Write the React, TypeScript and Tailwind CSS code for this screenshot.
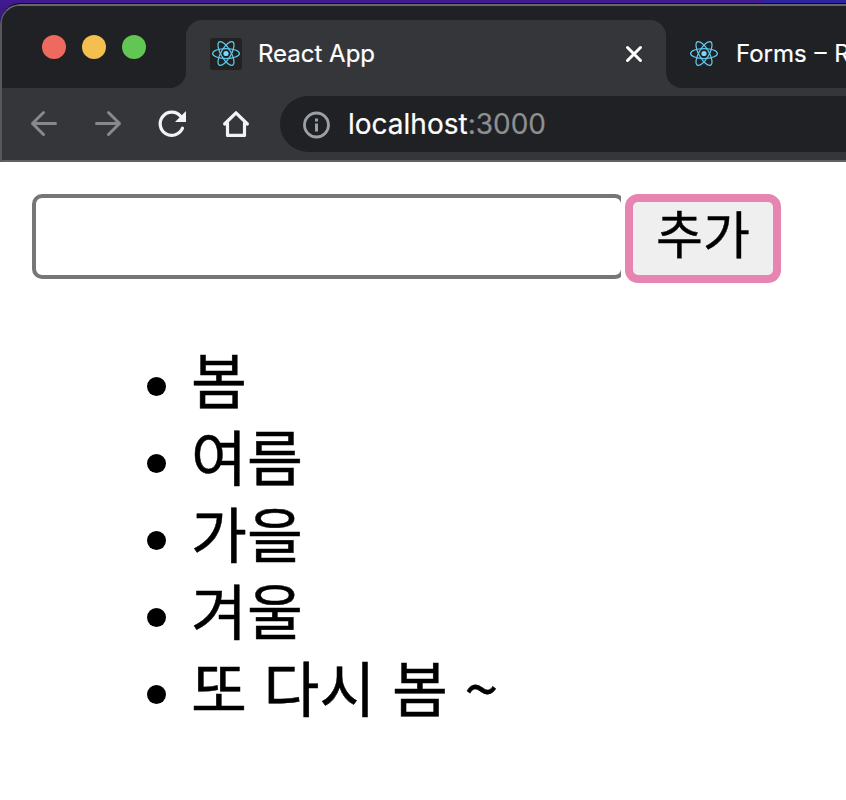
import React from "react";

const seasons = ["봄", "여름", "가을", "겨울", "또 다시 봄 ~"];

function ReactLogo({ className }: { className: string }) {
  return (
    <svg viewBox="0 0 32 32" className={className} fill="none" stroke="#61c8ec" strokeWidth="1.25">
      <circle cx="16" cy="15.5" r="2.6" fill="#7ad9fb" stroke="none" />
      <ellipse cx="16" cy="15.5" rx="13.4" ry="5" />
      <ellipse cx="16" cy="15.5" rx="13.4" ry="5" transform="rotate(60 16 15.5)" />
      <ellipse cx="16" cy="15.5" rx="13.4" ry="5" transform="rotate(120 16 15.5)" />
    </svg>
  );
}

function TabStrip() {
  return (
    <div className="flex h-[82px] bg-[#35363a]">
      <div className="w-[184px] shrink-0 bg-[#35363a]">
        <div className="flex h-full gap-4 rounded-br-[16px] bg-[#202124] pt-[29px] pl-[40px]">
          <span className="size-6 rounded-full bg-[#ee6a5f]" />
          <span className="size-6 rounded-full bg-[#f5bf4f]" />
          <span className="size-6 rounded-full bg-[#62c655]" />
        </div>
      </div>
      <div className="w-[480px] shrink-0 bg-[linear-gradient(#202124_50%,#35363a_50%)] pt-[14px]">
        <div className="flex h-[68px] items-center rounded-t-[16px] bg-[#35363a] pl-6 pr-5">
          <span className="size-8 rounded-[3px] bg-[#222222]">
            <ReactLogo className="size-8" />
          </span>
          <span className="ml-4 flex-1 text-[24px] text-white [-webkit-text-stroke:0.2px]">React App</span>
          <svg className="size-6" viewBox="0 0 24 24" fill="none" stroke="#fff" strokeWidth="3" strokeLinecap="round">
            <path d="M5.5 5.5 18.5 18.5M18.5 5.5 5.5 18.5" />
          </svg>
        </div>
      </div>
      <div className="flex flex-1 items-center overflow-hidden rounded-bl-[16px] bg-[#202124] pt-[14px] pl-[22px]">
        <ReactLogo className="size-8 shrink-0" />
        <span className="ml-4 text-[24px] whitespace-nowrap text-white [-webkit-text-stroke:0.2px] [word-spacing:1px]">Forms – React</span>
      </div>
    </div>
  );
}

function Toolbar() {
  return (
    <div className="flex h-[72px] items-center">
      <svg className="ml-[26px] size-8 shrink-0" viewBox="0 0 32 32" fill="none" stroke="#88898b" strokeWidth="3" strokeLinecap="round" strokeLinejoin="round">
        <path d="M27.5 15.5H4.5M15.5 4.5 4.5 15.5 15.5 26.5" />
      </svg>
      <svg className="ml-8 size-8 shrink-0" viewBox="0 0 32 32" fill="none" stroke="#88898b" strokeWidth="3" strokeLinecap="round" strokeLinejoin="round">
        <path d="M4.5 15.5H27.5M16.5 4.5 27.5 15.5 16.5 26.5" />
      </svg>
      <svg className="ml-8 size-8 shrink-0" viewBox="0 0 32 32" fill="none">
        <path d="M24.8 8.5A11.6 11.6 0 1 0 26.5 20.2" stroke="#f1f3f4" strokeWidth="3.2" strokeLinecap="round" />
        <path d="M30 3V14H19Z" fill="#f1f3f4" />
      </svg>
      <svg className="ml-8 size-8 shrink-0" viewBox="0 0 32 32" fill="none" stroke="#f1f3f4" strokeWidth="3.2" strokeLinejoin="round" strokeLinecap="round">
        <path d="M4.6 16 16 4.8 27.4 16M7.5 15V27.4H24.5V15" />
      </svg>
      <div className="ml-[28px] flex h-14 flex-1 items-center rounded-l-full bg-[#202124] pl-[22px]">
        <svg className="mt-px size-7" viewBox="0 0 28 28" fill="none">
          <circle cx="14.5" cy="14" r="12" stroke="#9aa0a6" strokeWidth="2.8" />
          <path d="M13 7.5h3v3h-3zM13 12.5h3v8h-3z" fill="#9aa0a6" />
        </svg>
        <span className="ml-[18px] text-[28px] text-white [-webkit-text-stroke:0.2px]">
          localhost<span className="text-[#8e8f92]">:3000</span>
        </span>
      </div>
    </div>
  );
}

export default function App() {
  return (
    <div className="h-[800px] w-[846px] overflow-hidden bg-white font-['Inter',sans-serif]">
      <div className="h-[162px] bg-[#3d1a88]">
        <div className="flex h-[3px]">
          <div className="w-[763px] bg-[#411a91]" />
          <div className="flex-1 bg-[#3023a3]" />
        </div>
        <div className="h-[159px] overflow-hidden rounded-tl-[21px] border-t border-[#0b0618]">
          <div className="h-[158px] overflow-hidden rounded-tl-[20px] border-t-2 border-b-2 border-l-2 border-t-[#68686b] border-b-[#626067] border-l-[#57585c] bg-[#35363a]">
            <TabStrip />
            <Toolbar />
          </div>
        </div>
      </div>

      <main className="pt-8 pl-8 font-['Noto_Sans_CJK_KR',sans-serif] text-black">
        <div className="flex h-[89px] items-start">
          <div className="h-[85px] w-[589px] overflow-hidden">
            <input
              aria-label="계절"
              className="block h-[85px] w-[593px] rounded-[10px] border-4 border-[#767676] bg-white px-2 text-[52px] outline-none"
            />
          </div>
          <button className="ml-1 flex h-[89px] w-[156px] items-center justify-center rounded-[13px] border-8 border-[#e685b0] bg-[#efefef] text-[51px] leading-none">
            <span className="-mt-[12px] [-webkit-text-stroke:0.4px]">추가</span>
          </button>
        </div>
        <ul className="mt-[56px] ml-[115px]">
          {seasons.map((season) => (
            <li key={season} className="flex h-[77px] items-center">
              <span className="mt-[17px] size-[19px] shrink-0 rounded-full bg-black" />
              <span className="ml-[25px] text-[60.8px] leading-[77px] whitespace-nowrap [word-spacing:3px] [-webkit-text-stroke:0.5px]">
                {season}
              </span>
            </li>
          ))}
        </ul>
      </main>
    </div>
  );
}
